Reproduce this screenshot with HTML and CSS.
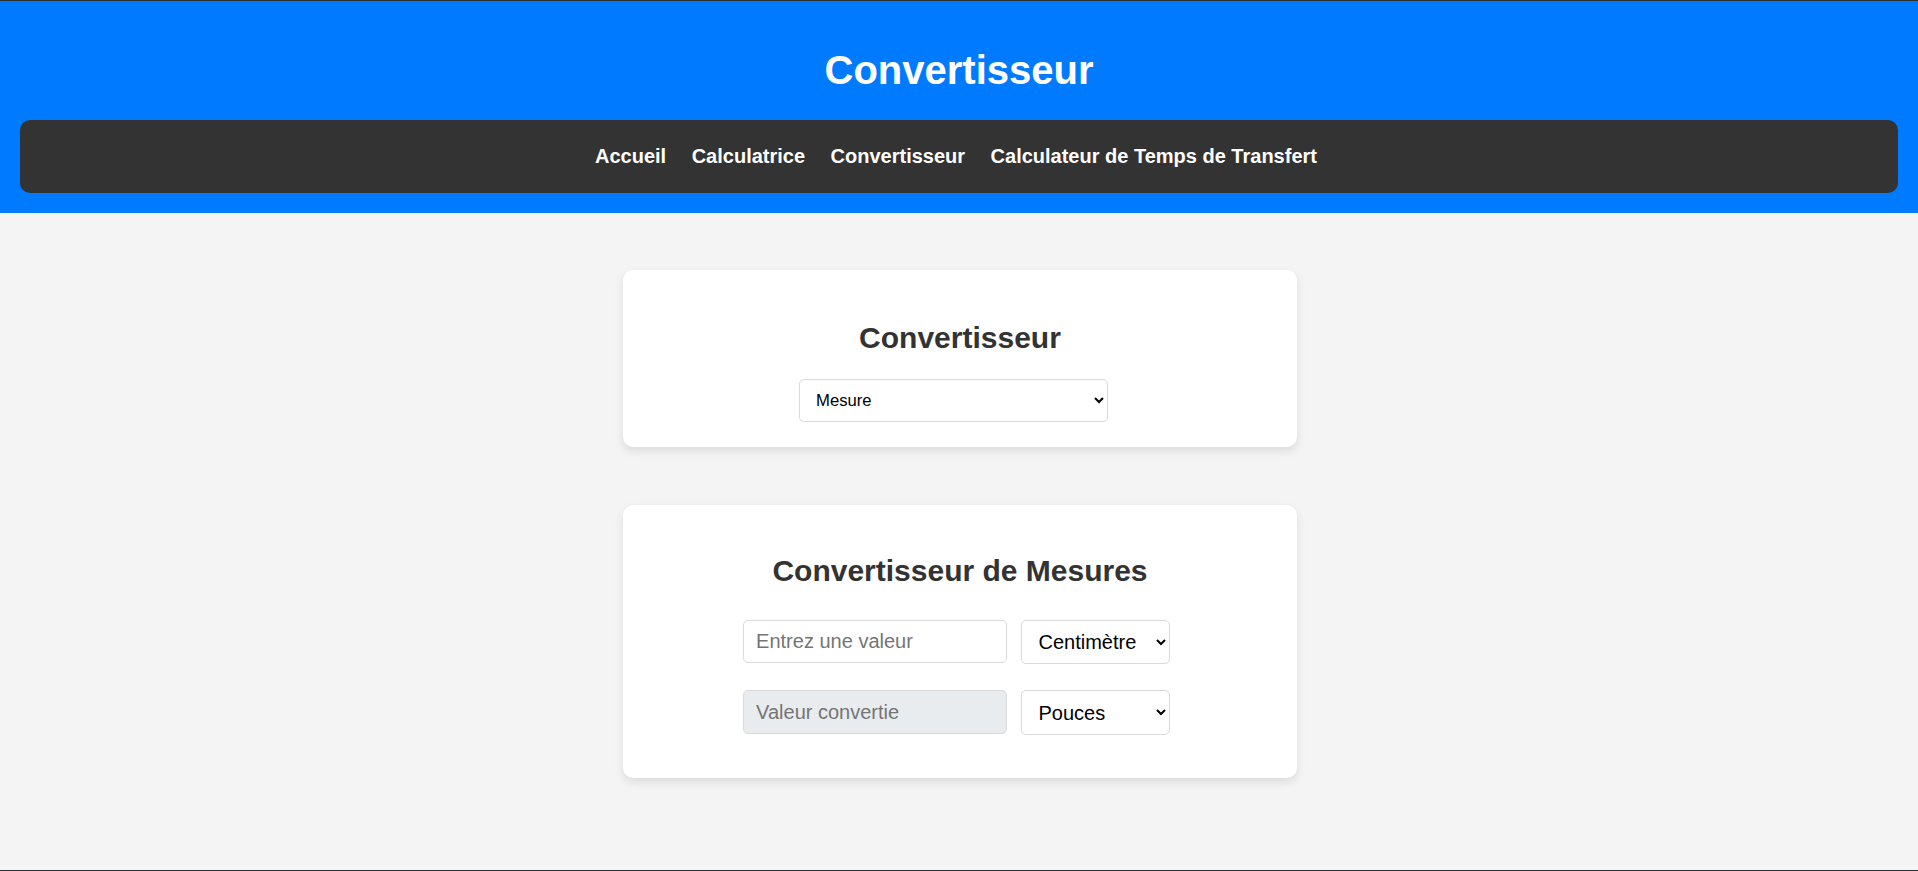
FILE: index.html
```html
<!DOCTYPE html>
<html lang="fr">
<head>
<meta charset="utf-8">
<title>Convertisseur</title>
<link rel="stylesheet" href="styles.css">
</head>
<body>
<header class="site-header">
  <h1 class="site-title">Convertisseur</h1>
  <nav class="main-nav">
    <a href="#">Accueil</a>
    <a href="#">Calculatrice</a>
    <a href="#">Convertisseur</a>
    <a href="#">Calculateur de Temps de Transfert</a>
  </nav>
</header>
<main class="content">
  <section class="card card-type">
    <h2 class="card-title">Convertisseur</h2>
    <div class="type-wrap">
      <select class="type-select">
        <option>Mesure</option>
        <option>Poids</option>
        <option>Température</option>
      </select>
    </div>
  </section>
  <section class="card card-measure">
    <h2 class="card-title">Convertisseur de Mesures</h2>
    <div class="conv-row">
      <input class="conv-input" type="text" placeholder="Entrez une valeur">
      <select class="unit-select">
        <option>Centimètre</option>
        <option>Mètre</option>
        <option>Pouces</option>
      </select>
    </div>
    <div class="conv-row">
      <input class="conv-input readonly" type="text" placeholder="Valeur convertie" readonly>
      <select class="unit-select">
        <option>Pouces</option>
        <option>Centimètre</option>
        <option>Pieds</option>
      </select>
    </div>
  </section>
</main>
</body>
</html>
```
FILE: styles.css
```css
html, body {
  margin: 0;
  padding: 0;
}
body {
  font-family: "Liberation Sans", Arial, sans-serif;
  background: #f4f4f4;
  color: #333;
  min-height: 100vh;
  box-sizing: border-box;
  border-top: 1px solid #2b2f36;
  border-bottom: 1px solid #2b2f36;
}
.site-header {
  background: #007bff;
  color: #fff;
  text-align: center;
  padding: 20px 19.6px 20.4px;
}
.site-title {
  margin: 26.5px 0 27.8px;
  font-size: 40px;
  line-height: normal;
  font-weight: bold;
}
.main-nav {
  background: #333;
  border-radius: 10px;
  padding: 24.8px 6px 24.9px 0;
  display: flex;
  justify-content: center;
  gap: 25.5px;
  line-height: normal;
}
.main-nav a {
  color: #fff;
  text-decoration: none;
  font-weight: bold;
  font-size: 20px;
}
.content {
  padding-top: 57px;
  display: flex;
  flex-direction: column;
  align-items: center;
  gap: 58.3px;
}
.card {
  width: 674.3px;
  box-sizing: border-box;
  background: #fff;
  border-radius: 10px;
  padding: 25px;
  box-shadow: 0 4px 10px rgba(0, 0, 0, 0.1);
  text-align: center;
  margin-left: 2px;
}
.card-title {
  font-size: 30px;
  line-height: normal;
  font-weight: bold;
  color: #333;
  margin: 0;
}
.card-type .card-title {
  margin: 25.3px 0 24.3px;
}
.card-measure .card-title {
  margin: 24px 0 31.8px;
}
.type-wrap {
  display: flex;
  justify-content: center;
  padding-right: 12.4px;
}
.type-select {
  width: 309.4px;
  height: 42.7px;
  box-sizing: border-box;
  font-family: "Liberation Sans", Arial, sans-serif;
  font-size: 16.67px;
  color: #000;
  background: #fff;
  border: 1px solid #dadada;
  border-radius: 5px;
  padding: 0 6px 0 12px;
}
.conv-row {
  display: flex;
  justify-content: center;
  align-items: flex-start;
  gap: 14.4px;
  padding-right: 6.8px;
  margin-top: 26px;
}
.card-measure .card-title + .conv-row {
  margin-top: 0;
}
.conv-row:last-child {
  margin-bottom: 18.3px;
}
.conv-input {
  width: 264px;
  height: 43.6px;
  box-sizing: border-box;
  font-family: "Liberation Sans", Arial, sans-serif;
  font-size: 20px;
  color: #000;
  border: 1px solid #dadada;
  border-radius: 5px;
  padding: 0 12px;
  background: #fff;
  outline: none;
}
.conv-input::placeholder {
  color: #757575;
}
.conv-input.readonly {
  background: #e9ecef;
}
.unit-select {
  width: 148.6px;
  height: 44.6px;
  box-sizing: border-box;
  font-family: "Liberation Sans", Arial, sans-serif;
  font-size: 20px;
  color: #000;
  background: #fff;
  border: 1px solid #dadada;
  border-radius: 5px;
  padding: 0 6px 0 12px;
}
```
